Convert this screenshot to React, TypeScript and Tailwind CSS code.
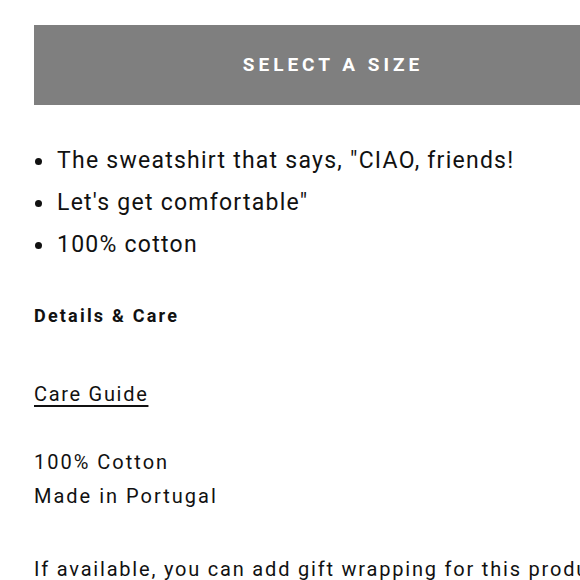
export default function App() {
  const bullets = [
    'The sweatshirt that says, "CIAO, friends!',
    "Let's get comfortable\"",
    "100% cotton",
  ];

  return (
    <div
      className="w-[580px] h-[580px] overflow-hidden bg-white text-[#111]"
      style={{ fontFamily: "Roboto, 'Liberation Sans', sans-serif" }}
    >
      <div className="pl-[34px] pt-[25px]">
        <button className="w-[598px] h-[80px] bg-[#7f7f7f] text-white font-bold text-[19px] tracking-[4px] uppercase flex items-center justify-center">
          Select a size
        </button>

        <ul className="mt-[35px]">
          {bullets.map((b) => (
            <li key={b} className="flex items-center h-[42px] text-[23px] tracking-[1.25px]">
              <span className="w-[7px] h-[7px] rounded-full bg-[#111] ml-[1px] mr-[15px]"></span>
              <span>{b}</span>
            </li>
          ))}
        </ul>

        <h3 className="mt-[38px] leading-[24px] font-bold text-[18px] tracking-[2.2px]">
          Details &amp; Care
        </h3>

        <a className="block mt-[54px] w-fit leading-[24px] text-[20px] tracking-[1.7px] underline underline-offset-[4px]">
          Care Guide
        </a>

        <div className="mt-[39px] text-[20px] leading-[34px] tracking-[2px]">
          <p>100% Cotton</p>
          <p>Made in Portugal</p>
        </div>

        <p className="mt-[39px] text-[20px] leading-[34px] tracking-[1.8px] whitespace-nowrap">
          If available, you can add gift wrapping for this product
        </p>
      </div>
    </div>
  );
}
